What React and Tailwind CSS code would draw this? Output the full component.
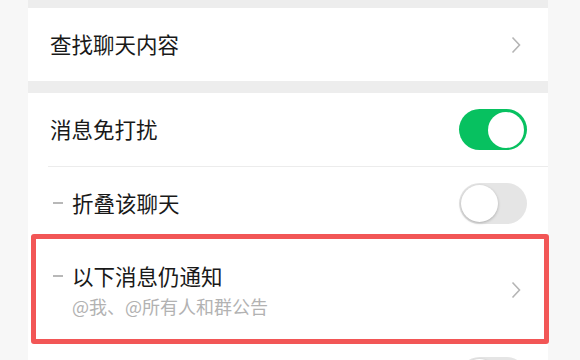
import React from "react";

const font = { fontFamily: '"Noto Sans CJK SC", "Noto Sans", sans-serif' };

function Chevron() {
  return (
    <svg width="10" height="18" viewBox="0 0 10 18" className="shrink-0">
      <polyline points="1.5,1.5 8.5,9 1.5,16.5" fill="none" stroke="#b5b5b5" strokeWidth="1.6" />
    </svg>
  );
}

function Toggle({ on }) {
  return on ? (
    <div className="w-[68px] h-[41px] rounded-full bg-[#07c160] flex items-center justify-end pr-[3px] shrink-0">
      <div className="w-[36px] h-[36px] rounded-full bg-white" />
    </div>
  ) : (
    <div className="w-[68px] h-[41px] rounded-full bg-[#e5e5e5] flex items-center pl-[2px] shrink-0">
      <div className="w-[37px] h-[37px] rounded-full bg-white shadow-[0_1px_3px_rgba(0,0,0,0.25)]" />
    </div>
  );
}

function Dash() {
  return <span className="w-[10px] h-[1.5px] bg-[#b8b8b8] mr-[9px] shrink-0" />;
}

export default function App() {
  return (
    <div className="w-[580px] h-[360px] overflow-hidden bg-[#f7f7f7] text-[#191919]" style={font}>
      <div className="ml-[28px] w-[520px] bg-[#ededed] pt-[8px]">
        <div className="h-[73px] bg-white flex items-center justify-between pl-[22px] pr-[27px]">
          <span className="text-[21.5px]">查找聊天内容</span>
          <Chevron />
        </div>

        <div className="mt-[12px] bg-white">
          <div className="h-[73px] flex items-center justify-between pl-[22px] pr-[21px]">
            <span className="text-[21.5px]">消息免打扰</span>
            <Toggle on />
          </div>
          <div className="ml-[20px] h-px bg-[#ececec]" />
          <div className="h-[72px] flex items-center justify-between pl-[25px] pr-[21px]">
            <span className="flex items-center">
              <Dash />
              <span className="text-[21.5px]">折叠该聊天</span>
            </span>
            <Toggle />
          </div>
          <div className="relative">
            <div className="h-[101px] flex items-center justify-between pl-[25px] pr-[27px]">
              <div className="flex flex-col">
                <span className="flex items-center">
                  <Dash />
                  <span className="text-[21.5px] leading-[30px]">以下消息仍通知</span>
                </span>
                <span className="ml-[19px] mt-[3px] text-[18px] text-[#b2b2b2] leading-[24px]">@我、@所有人和群公告</span>
              </div>
              <Chevron />
            </div>
            <div className="absolute left-[3px] -right-[1px] -top-[5px] -bottom-[4px] border-[5px] border-[#f25656] rounded-[3px]" />
          </div>
          <div className="h-[73px] flex items-start justify-end pt-[17px] pr-[21px]">
            <Toggle />
          </div>
        </div>
      </div>
    </div>
  );
}
